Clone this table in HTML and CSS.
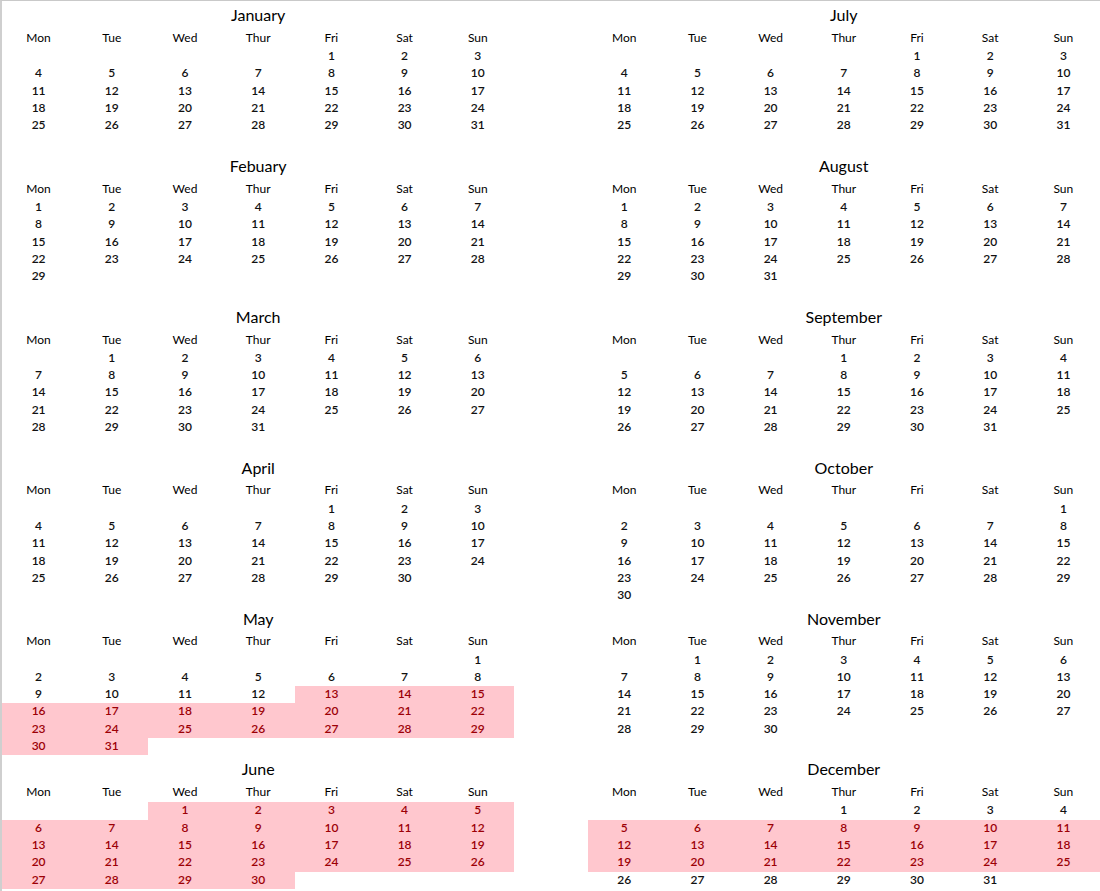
FILE: index.html
```html
<!DOCTYPE html>
<html lang="en">
<head>
<meta charset="utf-8">
<title>Calendar 2016</title>
<link rel="stylesheet" href="styles.css">
</head>
<body>
<div class="sheet">
  <div class="col" id="left"></div>
  <div class="col" id="right"></div>
</div>
<script src="script.js"></script>
</body>
</html>
```
FILE: styles.css
```css
html, body {
  margin: 0;
  padding: 0;
  background: #ffffff;
}
body {
  font-family: Lato, "Open Sans", "Liberation Sans", sans-serif;
  color: #000000;
  overflow: hidden;
}
.sheet {
  width: 1100px;
  height: 891px;
  box-sizing: border-box;
  border-top: 1px solid #c9c9c9;
  border-left: 2px solid #cfcfcf;
  display: grid;
  grid-template-columns: 7fr 1fr 7fr;
  overflow: hidden;
}
#left { grid-column: 1; }
#right { grid-column: 3; }
.col {
  display: flex;
  flex-direction: column;
}
.month {
  display: grid;
  grid-template-columns: repeat(7, 1fr);
  grid-template-rows: 29.8px repeat(7, 17.3px);
  flex: none;
}
.title {
  grid-column: 3 / 6;
  grid-row: 1;
  text-align: center;
  font-size: 16px;
  line-height: 27px;
  white-space: nowrap;
}
.dow {
  text-align: center;
  font-size: 12px;
  line-height: 14.5px;
}
.day {
  text-align: center;
  font-size: 12px;
  font-weight: 600;
  line-height: 15.6px;
  color: #111111;
}
.day.hl {
  background: #ffc7ce;
  color: #9c0006;
}
```
FILE: script.js
```js
(function () {
  var names = ["January", "Febuary", "March", "April", "May", "June",
    "July", "August", "September", "October", "November", "December"];
  var dows = ["Mon", "Tue", "Wed", "Thur", "Fri", "Sat", "Sun"];
  var lens = [31, 29, 31, 30, 31, 30, 31, 31, 31, 30, 30, 31];
  var first = [4, 0, 1, 4, 6, 2, 4, 0, 3, 6, 1, 3];
  var hl = { 4: [13, 31], 5: [1, 30], 11: [5, 25] };

  function build(m) {
    var el = document.createElement("div");
    el.className = "month";
    var t = document.createElement("div");
    t.className = "title";
    t.textContent = names[m];
    el.appendChild(t);
    for (var i = 0; i < 7; i++) {
      var h = document.createElement("div");
      h.className = "dow";
      h.style.gridRow = 2;
      h.style.gridColumn = i + 1;
      h.textContent = dows[i];
      el.appendChild(h);
    }
    for (var d = 1; d <= lens[m]; d++) {
      var idx = first[m] + d - 1;
      var c = document.createElement("div");
      c.className = "day";
      var r = hl[m];
      if (r && d >= r[0] && d <= r[1]) c.className += " hl";
      c.style.gridRow = 3 + Math.floor(idx / 7);
      c.style.gridColumn = (idx % 7) + 1;
      c.textContent = d;
      el.appendChild(c);
    }
    return el;
  }
  var left = document.getElementById("left");
  var right = document.getElementById("right");
  for (var m = 0; m < 6; m++) left.appendChild(build(m));
  for (var m2 = 6; m2 < 12; m2++) right.appendChild(build(m2));
})();
```
